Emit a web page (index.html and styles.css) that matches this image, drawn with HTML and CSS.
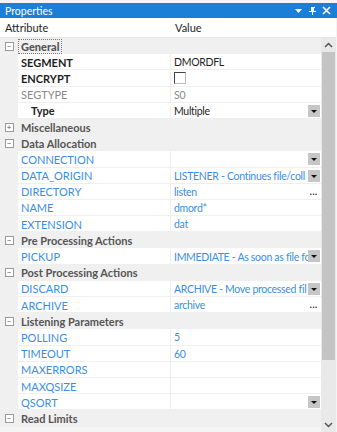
FILE: index.html
```html
<!DOCTYPE html>
<html lang="en">
<head>
    <meta charset="UTF-8">
    <title>Properties</title>
    <link rel="stylesheet" href="styles.css">
</head>
<body>
    <div class="panel">
        <!-- Title bar -->
        <div class="titlebar">
            <span class="title">Properties</span>
            <span class="tools">
                <svg width="9" height="9" viewBox="0 0 9 9"><path d="M1 3h7L4.5 7z" fill="#fff"/></svg>
                <svg width="9" height="9" viewBox="0 0 9 9"><path d="M3 1h4v1H6v3h2v1H5v3H4V6H1V5h2V2H3z" fill="#fff"/></svg>
                <svg width="9" height="9" viewBox="0 0 9 9"><path d="M1 1l7 7M8 1L1 8" stroke="#fff" stroke-width="1.6"/></svg>
            </span>
        </div>

        <!-- Column header -->
        <div class="header">
            <span class="h-name">Attribute</span>
            <span class="h-value">Value</span>
        </div>

        <div class="body">
            <div class="grid">
                <div class="row cat"><span class="gutter"><i class="tog">&minus;</i></span><span class="name"><b class="focus">General</b></span></div>
                <div class="row"><span class="gutter"></span><span class="name bold">SEGMENT</span><span class="value">DMORDFL</span></div>
                <div class="row"><span class="gutter"></span><span class="name bold">ENCRYPT</span><span class="value"><i class="check"></i></span></div>
                <div class="row"><span class="gutter"></span><span class="name dim">SEGTYPE</span><span class="value dim">S0</span></div>
                <div class="row"><span class="gutter"></span><span class="name bold sub">Type</span><span class="value">Multiple<i class="drop"></i></span></div>
                <div class="row cat"><span class="gutter"><i class="tog">+</i></span><span class="name">Miscellaneous</span></div>
                <div class="row cat"><span class="gutter"><i class="tog">&minus;</i></span><span class="name">Data Allocation</span></div>
                <div class="row blue"><span class="gutter"></span><span class="name">CONNECTION</span><span class="value"><i class="drop"></i></span></div>
                <div class="row blue"><span class="gutter"></span><span class="name">DATA_ORIGIN</span><span class="value">LISTENER - Continues file/coll<i class="drop"></i></span></div>
                <div class="row blue"><span class="gutter"></span><span class="name">DIRECTORY</span><span class="value">listen<i class="dots">...</i></span></div>
                <div class="row blue"><span class="gutter"></span><span class="name">NAME</span><span class="value">dmord*</span></div>
                <div class="row blue"><span class="gutter"></span><span class="name">EXTENSION</span><span class="value">dat</span></div>
                <div class="row cat"><span class="gutter"><i class="tog">&minus;</i></span><span class="name">Pre Processing Actions</span></div>
                <div class="row blue"><span class="gutter"></span><span class="name">PICKUP</span><span class="value">IMMEDIATE - As soon as file fo<i class="drop"></i></span></div>
                <div class="row cat"><span class="gutter"><i class="tog">&minus;</i></span><span class="name">Post Processing Actions</span></div>
                <div class="row blue"><span class="gutter"></span><span class="name">DISCARD</span><span class="value">ARCHIVE - Move processed fil<i class="drop"></i></span></div>
                <div class="row blue"><span class="gutter"></span><span class="name">ARCHIVE</span><span class="value">archive<i class="dots">...</i></span></div>
                <div class="row cat"><span class="gutter"><i class="tog">&minus;</i></span><span class="name">Listening Parameters</span></div>
                <div class="row blue"><span class="gutter"></span><span class="name">POLLING</span><span class="value">5</span></div>
                <div class="row blue"><span class="gutter"></span><span class="name">TIMEOUT</span><span class="value">60</span></div>
                <div class="row blue"><span class="gutter"></span><span class="name">MAXERRORS</span><span class="value"></span></div>
                <div class="row blue"><span class="gutter"></span><span class="name">MAXQSIZE</span><span class="value"></span></div>
                <div class="row blue"><span class="gutter"></span><span class="name">QSORT</span><span class="value"><i class="drop"></i></span></div>
                <div class="row cat"><span class="gutter"><i class="tog">&minus;</i></span><span class="name">Read Limits</span></div>
            </div>

            <!-- Scrollbar -->
            <div class="scrollbar">
                <svg class="arrow" width="9" height="6" viewBox="0 0 9 6"><path d="M1 5l3.5-3.5L8 5" fill="none" stroke="#555" stroke-width="1.5"/></svg>
                <span class="thumb"></span>
                <span class="track"></span>
                <svg class="arrow" width="9" height="6" viewBox="0 0 9 6"><path d="M1 1l3.5 3.5L8 1" fill="none" stroke="#555" stroke-width="1.5"/></svg>
            </div>
        </div>
    </div>
</body>
</html>
```

FILE: styles.css
```css
/* Page */
body {
    margin: 0;
    background-color: #f4f4f4;
    font-family: Lato, "Noto Sans", sans-serif;
    font-size: 11px;
    color: #1e1e1e;
}

.panel {
    width: 337px;
    height: 432px;
    padding-top: 3px;
    box-sizing: border-box;
    background-color: #f4f4f4;
    overflow: hidden;
}

/* Title bar */
.titlebar {
    height: 15px;
    background-color: #1c7ed6;
    color: #fff;
    display: flex;
    align-items: center;
    justify-content: space-between;
    padding: 0 6px 0 5px;
}

.title {
    font-size: 10.5px;
}

.tools {
    display: flex;
    gap: 5px;
}

/* Column header */
.header {
    height: 19px;
    display: flex;
    align-items: center;
    background-color: #fff;
    border-bottom: 1px solid #e6e6e6;
    margin-right: 1px;
}

.h-name {
    width: 170px;
    padding-left: 5px;
    box-sizing: border-box;
}

.h-value {
    padding-left: 5px;
}

/* Grid body */
.body {
    display: flex;
}

.grid {
    width: 321px;
}

.row {
    height: 16.2px;
    display: flex;
    align-items: center;
    background-color: #fff;
    box-shadow: inset 0 -1px 0 #efefef;
}

.gutter {
    width: 18px;
    height: 100%;
    flex: none;
    display: flex;
    align-items: center;
    justify-content: center;
    background-color: #f0f0f0;
}

.name {
    width: 152px;
    flex: none;
    padding-left: 3px;
    box-sizing: border-box;
    white-space: nowrap;
}

.value {
    flex: 1;
    height: 100%;
    display: flex;
    align-items: center;
    position: relative;
    padding-left: 3px;
    border-left: 1px solid #efefef;
    font-size: 10.5px;
    letter-spacing: -0.3px;
    white-space: nowrap;
    overflow: hidden;
}

.bold {
    font-weight: bold;
}

.sub {
    padding-left: 13px;
}

.dim {
    color: #8a8a8a;
}

.blue .name,
.blue .value {
    color: #3b8ee4;
}

/* Category rows */
.cat {
    background-color: #f0f0f0;
}

.cat .name {
    font-weight: bold;
    color: #555;
}

.focus {
    border: 1px dotted #777;
    padding: 0 2px;
    margin-left: -3px;
}

.tog {
    width: 7px;
    height: 7px;
    border: 1px solid #9a9a9a;
    background-color: #fff;
    color: #555;
    font-style: normal;
    font-size: 8px;
    line-height: 7px;
    text-align: center;
}

/* Editors */
.check {
    width: 10px;
    height: 10px;
    border: 1px solid #444;
    border-right-color: #bbb;
    border-bottom-color: #bbb;
    background-color: #fff;
}

.drop {
    position: absolute;
    right: 1px;
    top: 2px;
    width: 12px;
    height: 12px;
    background-color: #c6c6c6;
}

.drop::after {
    content: '';
    position: absolute;
    left: 3px;
    top: 5px;
    border-left: 3px solid transparent;
    border-right: 3px solid transparent;
    border-top: 3px solid #111;
}

.dots {
    position: absolute;
    right: 1px;
    top: 1px;
    width: 13px;
    font-style: normal;
    font-size: 11px;
    letter-spacing: 0;
    line-height: 12px;
    color: #222;
    text-align: center;
    background-color: #fff;
}

/* Scrollbar */
.scrollbar {
    width: 15px;
    height: 394px;
    display: flex;
    flex-direction: column;
    align-items: center;
    background-color: #e9e9e9;
}

.arrow {
    margin: 4px 0 4px;
    flex: none;
}

.thumb {
    width: 13px;
    height: 308px;
    background-color: #c4c4c4;
}

.track {
    flex: 1;
}
```
